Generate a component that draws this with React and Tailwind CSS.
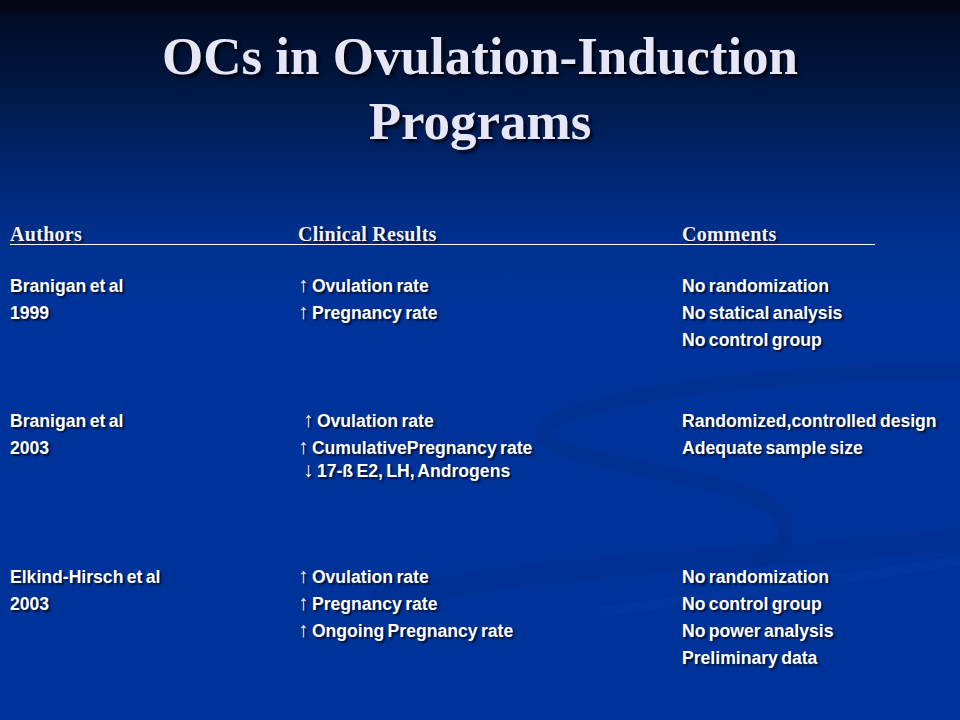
const blocks = [
  {
    top: "mt-[28px]",
    authors: ["Branigan et al", "1999"],
    results: [
      { arrow: "↑", text: "Ovulation rate" },
      { arrow: "↑", text: "Pregnancy rate" },
    ],
    comments: ["No randomization", "No statical analysis", "No control group"],
  },
  {
    top: "mt-[54px]",
    authors: ["Branigan et al", "2003"],
    results: [
      { arrow: "↑", text: "Ovulation rate", indent: true },
      { arrow: "↑", text: "CumulativePregnancy rate" },
      { arrow: "↓", text: "17-ß E2, LH, Androgens", indent: true, tight: true },
    ],
    comments: ["Randomized,controlled design", "Adequate sample size"],
  },
  {
    top: "mt-[79px]",
    authors: ["Elkind-Hirsch et al", "2003"],
    results: [
      { arrow: "↑", text: "Ovulation rate" },
      { arrow: "↑", text: "Pregnancy rate" },
      { arrow: "↑", text: "Ongoing Pregnancy rate" },
    ],
    comments: [
      "No randomization",
      "No control group",
      "No power analysis",
      "Preliminary data",
    ],
  },
];

const Swoosh = () => (
  <svg
    className="absolute inset-0 pointer-events-none"
    width="960"
    height="720"
    viewBox="0 0 960 720"
  >
    <path
      d="M960 372 C 760 370, 560 400, 545 430 C 530 460, 700 470, 760 500 C 800 520, 790 545, 760 560"
      fill="none"
      stroke="#00287f"
      strokeOpacity="0.25"
      strokeWidth="16"
      strokeLinecap="round"
    />
    <path
      d="M380 600 C 560 560, 760 560, 960 540"
      fill="none"
      stroke="#00287f"
      strokeOpacity="0.22"
      strokeWidth="22"
      strokeLinecap="round"
    />
    <path
      d="M600 612 C 760 590, 880 575, 960 560"
      fill="none"
      stroke="#0a3fa6"
      strokeOpacity="0.3"
      strokeWidth="10"
    />
  </svg>
);

const shadow = "[text-shadow:2px_2px_2px_rgba(0,0,0,0.65)]";

export default function App() {
  return (
    <div className="relative w-[960px] h-[720px] overflow-hidden bg-[linear-gradient(to_bottom,#050514_0px,#050514_10px,#000c24_13px,#001845_90px,#002670_170px,#00318f_240px,#003399_300px,#003399_100%)]">
      <Swoosh />
      <div className="relative">
        <h1
          className={`pt-[24px] text-center text-[53px] leading-[65px] font-bold text-[#e6e6f7] font-['Liberation_Serif',serif] [text-shadow:3px_3px_3px_rgba(0,0,0,0.75)]`}
        >
          OCs in Ovulation-Induction
          <br />
          Programs
        </h1>

        <div
          className={`mt-[70px] ml-[10px] w-[865px] flex border-b border-white text-[20px] leading-[20px] font-bold text-[#f2f2ff] tracking-[0.3px] font-['Liberation_Serif',serif] ${shadow}`}
        >
          <div className="w-[288px]">Authors</div>
          <div className="w-[384px]">Clinical Results</div>
          <div>Comments</div>
        </div>

        <div
          className={`pl-[10px] text-[17.6px] leading-[27px] font-bold text-white font-['Liberation_Sans',Arial,sans-serif] [word-spacing:-1.5px] ${shadow}`}
        >
          {blocks.map((b, i) => (
            <div key={i} className={`flex ${b.top}`}>
              <div className="w-[288px]">
                {b.authors.map((a) => (
                  <div key={a} className="h-[27px]">{a}</div>
                ))}
              </div>
              <div className="w-[384px]">
                {b.results.map((r) => (
                  <div
                    key={r.text}
                    className={`${r.indent ? "pl-[5px]" : ""} ${
                      r.tight ? "h-[23px] leading-[19px]" : "h-[27px]"
                    }`}
                  >
                    <span className="text-[21px] leading-[0px] font-normal">
                      {r.arrow}
                    </span>{" "}
                    {r.text}
                  </div>
                ))}
              </div>
              <div>
                {b.comments.map((c) => (
                  <div key={c} className="h-[27px]">{c}</div>
                ))}
              </div>
            </div>
          ))}
        </div>
      </div>
    </div>
  );
}
